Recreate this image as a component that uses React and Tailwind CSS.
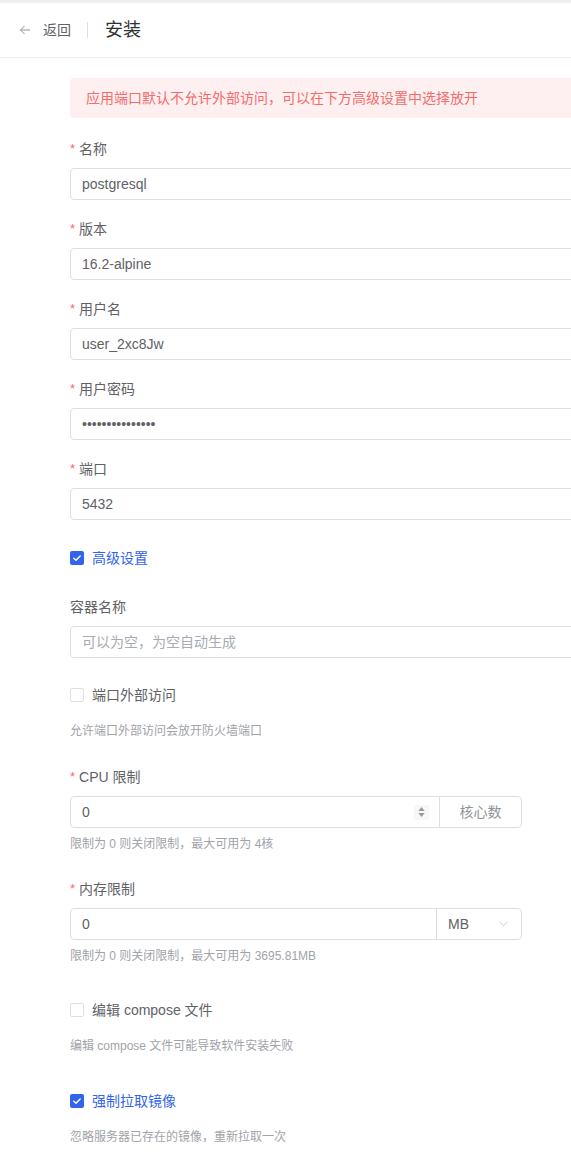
import React from 'react';

const FONT = { fontFamily: '"Liberation Sans", "Noto Sans CJK SC", sans-serif' };

const Label = ({ text, required }) => (
  <div className="h-[22px] leading-[22px] text-[14px] text-[#606266] flex items-center">
    {required && <span className="text-[#f56c6c] mr-[4px] text-[13px]">*</span>}
    <span>{text}</span>
  </div>
);

const TextInput = ({ value, placeholder }) => (
  <div className="mt-[8px] h-8 w-[720px] border border-[#dcdfe6] rounded-[4px] bg-white flex items-center px-[11px] text-[14px]">
    {value ? (
      <span className="text-[#606266]">{value}</span>
    ) : (
      <span className="text-[#a8abb2]">{placeholder}</span>
    )}
  </div>
);

const Field = ({ label, value, placeholder, required = true, className = '' }) => (
  <div className={className}>
    <Label text={label} required={required} />
    <TextInput value={value} placeholder={placeholder} />
  </div>
);

const CheckMark = () => (
  <svg viewBox="0 0 14 14" className="w-[14px] h-[14px]">
    <path d="M3.8 7.2 L6 9.3 L10.2 5" fill="none" stroke="#fff" strokeWidth="1.4" strokeLinecap="round" strokeLinejoin="round" />
  </svg>
);

const Checkbox = ({ label, checked, className = '' }) => (
  <div className={`h-[22px] flex items-center gap-[8px] ${className}`}>
    {checked ? (
      <span className="w-[14px] h-[14px] rounded-[2px] bg-[#3263ed] flex items-center justify-center">
        <CheckMark />
      </span>
    ) : (
      <span className="w-[14px] h-[14px] rounded-[2px] border border-[#dcdfe6] bg-white" />
    )}
    <span className={`text-[14px] ${checked ? 'text-[#3263ed]' : 'text-[#606266]'}`}>{label}</span>
  </div>
);

const Help = ({ text, className = '' }) => (
  <div className={`h-[20px] leading-[20px] text-[12px] text-[#a0a3a9] ${className}`}>{text}</div>
);

export default function App() {
  return (
    <div className="w-[571px] min-h-[1167px] bg-white overflow-hidden" style={FONT}>
      <div className="h-[3px] bg-[#eeeeee]" />
      <div className="h-[55px] border-b border-[#ebeef5] flex items-center pl-[19px]">
        <svg viewBox="0 0 12 12" className="w-[12px] h-[12px]">
          <path d="M11 6 H1.5 M5.5 2 L1.5 6 L5.5 10" fill="none" stroke="#909399" strokeWidth="1" />
        </svg>
        <span className="ml-[12px] text-[14px] text-[#606266]">返回</span>
        <span className="ml-[16px] w-px h-[16px] bg-[#dcdfe6]" />
        <span className="ml-[17px] text-[18px] text-[#303133]">安装</span>
      </div>

      <div className="pl-[70px] pt-[20px] pb-[20px]">
        <div className="h-[40px] w-[720px] bg-[#fef0f0] rounded-[4px] flex items-center pl-[16px] text-[14px] text-[#f56c6c]">
          应用端口默认不允许外部访问，可以在下方高级设置中选择放开
        </div>

        <Field className="mt-[20px]" label="名称" value="postgresql" />
        <Field className="mt-[18px]" label="版本" value="16.2-alpine" />
        <Field className="mt-[18px]" label="用户名" value="user_2xc8Jw" />
        <Field className="mt-[18px]" label="用户密码" value="•••••••••••••••" />
        <Field className="mt-[18px]" label="端口" value="5432" />

        <Checkbox className="mt-[27px]" label="高级设置" checked />

        <Field className="mt-[27px]" label="容器名称" required={false} placeholder="可以为空，为空自动生成" />

        <Checkbox className="mt-[26px]" label="端口外部访问" />
        <Help className="mt-[15px]" text="允许端口外部访问会放开防火墙端口" />

        <div className="mt-[25px]">
          <Label text="CPU 限制" required />
          <div className="mt-[8px] h-8 w-[452px] border border-[#dcdfe6] rounded-[4px] bg-white flex">
            <div className="flex-1 flex items-center pl-[11px] pr-[10px]">
              <span className="flex-1 text-[14px] text-[#606266]">0</span>
              <span className="w-[15px] h-[15px] bg-[#f7f7f7] flex flex-col items-center justify-center gap-[2px]">
                <svg viewBox="0 0 8 5" className="w-[7px] h-[4px]"><path d="M0 5 L4 0 L8 5 Z" fill="#9a9a9a" /></svg>
                <svg viewBox="0 0 8 5" className="w-[7px] h-[4px]"><path d="M0 0 L4 5 L8 0 Z" fill="#9a9a9a" /></svg>
              </span>
            </div>
            <div className="w-[82px] border-l border-[#dcdfe6] flex items-center justify-center text-[14px] text-[#909399]">
              核心数
            </div>
          </div>
          <Help className="mt-[6px]" text="限制为 0 则关闭限制，最大可用为 4核" />
        </div>

        <div className="mt-[24px]">
          <Label text="内存限制" required />
          <div className="mt-[8px] h-8 w-[452px] border border-[#dcdfe6] rounded-[4px] bg-white flex">
            <div className="flex-1 flex items-center pl-[11px] text-[14px] text-[#606266]">0</div>
            <div className="w-[85px] border-l border-[#dcdfe6] flex items-center pl-[11px] pr-[13px] justify-between">
              <span className="text-[14px] text-[#606266]">MB</span>
              <svg viewBox="0 0 10 6" className="w-[9px] h-[6px]">
                <path d="M0.5 0.5 L5 5 L9.5 0.5" fill="none" stroke="#c0c4cc" strokeWidth="1" />
              </svg>
            </div>
          </div>
          <Help className="mt-[6px]" text="限制为 0 则关闭限制，最大可用为 3695.81MB" />
        </div>

        <Checkbox className="mt-[33px]" label="编辑 compose 文件" />
        <Help className="mt-[15px]" text="编辑 compose 文件可能导致软件安装失败" />

        <Checkbox className="mt-[34px]" label="强制拉取镜像" checked />
        <Help className="mt-[15px]" text="忽略服务器已存在的镜像，重新拉取一次" />
      </div>
    </div>
  );
}
